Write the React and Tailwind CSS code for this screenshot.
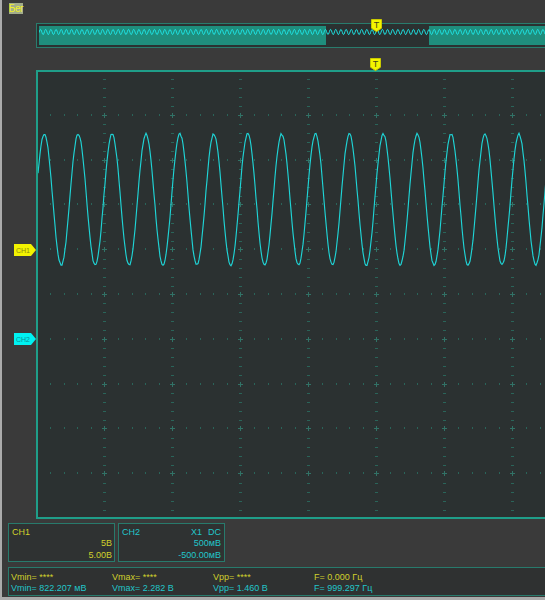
import React from "react";

const FONT = "font-['Liberation_Sans','Arial',sans-serif]";

function frac(v) {
  return v - Math.floor(v);
}
function rnd(i) {
  return frac(Math.sin(i * 12.9898 + 78.233) * 43758.5453);
}

function TMarker() {
  return (
    <svg width="11" height="13" viewBox="0 0 11 13" className="block overflow-visible">
      <path d="M0.5 0.5H10.5V9.2L5.5 12.6L0.5 9.2Z" fill="#f4f400" stroke="#caca00" strokeWidth="1" />
      <text
        x="5.5"
        y="8.8"
        textAnchor="middle"
        fontSize="9"
        fontFamily="Liberation Sans, Arial, sans-serif"
        fill="#45451c"
      >
        T
      </text>
    </svg>
  );
}

function ChMarker({ fill, textColor, label }) {
  return (
    <svg width="22" height="12" viewBox="0 0 22 12" className="block">
      <path d="M0 0H17L22 6L17 12H0Z" fill={fill} />
      <text
        x="9"
        y="8.7"
        textAnchor="middle"
        fontSize="7"
        fontFamily="Liberation Sans, Arial, sans-serif"
        fill={textColor}
      >
        {label}
      </text>
    </svg>
  );
}

function Overview() {
  const pts = [];
  for (let x = 39; x <= 550; x += 0.5) {
    const y = 32 - 2.6 * Math.cos((2 * Math.PI * (x - 40.5)) / 5.18);
    pts.push(x.toFixed(1) + "," + y.toFixed(2));
  }
  return (
    <svg width="509" height="19" viewBox="39 26 509 19" className="block">
      <rect x="39" y="26" width="287" height="19" fill="#1f8e7d" />
      <rect x="429" y="26" width="130" height="19" fill="#1f8e7d" />
      <polyline points={pts.join(" ")} fill="none" stroke="#1ee3e3" strokeWidth="1" />
    </svg>
  );
}

function Plot() {
  const tick = "#2a6459";
  const majorX = [];
  for (let k = 1; k <= 9; k++) majorX.push(36.5 + 68 * k);
  const majorY = [];
  for (let k = 1; k <= 9; k++) majorY.push(70.5 + 44.8 * k);

  const marks = [];
  majorX.forEach((x, a) => {
    for (let j = 1; j < 50; j++) {
      if (j % 5 === 0) continue;
      const y = Math.round(70.5 + 8.96 * j);
      marks.push(
        <rect key={"v" + a + "-" + j} x={Math.floor(x) - 1} y={y} width="3" height="1" fill={tick} />
      );
    }
  });
  majorY.forEach((y, a) => {
    for (let i = 1; i < 50; i++) {
      if (i % 5 === 0) continue;
      const x = Math.round(36.5 + 13.6 * i);
      marks.push(
        <rect key={"h" + a + "-" + i} x={x} y={Math.floor(y) - 1} width="1" height="2" fill={tick} />
      );
    }
  });
  majorX.forEach((x, a) => {
    majorY.forEach((y, b) => {
      const cx = Math.floor(x);
      const cy = Math.floor(y);
      marks.push(
        <g key={"c" + a + "-" + b} fill="#317266">
          <rect x={cx - 2} y={cy} width="5" height="1" />
          <rect x={cx} y={cy - 2} width="1" height="5" />
        </g>
      );
    });
  });

  const wave = [];
  let i = 0;
  for (let x = 38; x <= 716; x += 1) {
    const base = 199.5 - 65.5 * Math.cos((2 * Math.PI * (x - 44.3)) / 33.9);
    const y = base + (rnd(i) - 0.5) * 1.8;
    wave.push(x + "," + y.toFixed(2));
    i++;
  }

  return (
    <svg width="678" height="445" viewBox="38 72 678 445" className="block">
      {marks}
      <polyline points={wave.join(" ")} fill="none" stroke="#1fd4d6" strokeWidth="1.15" />
    </svg>
  );
}

function MeasureCol({ label, top, bottom }) {
  return (
    <div className="flex flex-col w-[101px] shrink-0">
      <div className="text-[#d0d02c] leading-[10.5px] whitespace-pre">
        {label}= {top}
      </div>
      <div className="text-[#22c6ca] leading-[10.5px] whitespace-pre">
        {label}= {bottom}
      </div>
    </div>
  );
}

export default function App() {
  return (
    <div className={"w-[545px] h-[600px] overflow-hidden bg-[#3a3a3a] flex flex-col text-[9px] " + FONT}>
      <div className="flex h-[597px] shrink-0">
        <div className="w-[2px] shrink-0 bg-[#ababab]" />
        <div className="flex flex-col flex-1 min-w-0">
          {/* top label row */}
          <div className="h-[23px] shrink-0 flex items-start">
            <div className="ml-[7px] mt-[3px] w-[14px] h-[11px] bg-[#a2ac8a] text-[#f0f028] text-[10px] leading-[11px] tracking-[-0.5px] flex items-center justify-center overflow-visible whitespace-nowrap">
              Бег
            </div>
          </div>

          {/* overview bar */}
          <div className="ml-[34px] h-[25px] w-[520px] shrink-0 relative border border-[#297c6d] bg-[#2b3131] p-[2px]">
            <Overview />
            <div className="absolute left-[334px] top-[-5px]">
              <TMarker />
            </div>
          </div>

          <div className="h-[10px] shrink-0" />

          {/* trigger marker row */}
          <div className="h-[12px] shrink-0 flex items-start">
            <div className="ml-[368px] relative z-10">
              <TMarker />
            </div>
          </div>

          {/* plot row */}
          <div className="flex h-[449px] shrink-0">
            <div className="w-[34px] shrink-0 relative">
              <div className="absolute left-[12px] top-[174px]">
                <ChMarker fill="#f2f200" textColor="#8a8a10" label="CH1" />
              </div>
              <div className="absolute left-[12px] top-[263px]">
                <ChMarker fill="#00f2f2" textColor="#0b8f95" label="CH2" />
              </div>
            </div>
            <div className="w-[682px] h-[449px] shrink-0 border-2 border-[#1f9e89] bg-[#2b3131]">
              <Plot />
            </div>
          </div>

          {/* channel boxes */}
          <div className="mt-[4px] ml-[6px] flex gap-[3px] shrink-0">
            <div className="w-[107px] h-[39px] border border-[#287a6c] bg-[#2f3232] pt-[2.5px] pl-[3px] pr-[2px] text-[#d0d02c] leading-[11.5px]">
              <div>CH1</div>
              <div className="text-right">5В</div>
              <div className="text-right">5.00В</div>
            </div>
            <div className="w-[107px] h-[39px] border border-[#287a6c] bg-[#2f3232] pt-[2.5px] pl-[3px] pr-[3px] text-[#22c6ca] leading-[11.5px]">
              <div className="flex justify-between">
                <span>CH2</span>
                <span className="flex gap-[6px]">
                  <span>X1</span>
                  <span>DC</span>
                </span>
              </div>
              <div className="text-right">500мВ</div>
              <div className="text-right">-500.00мВ</div>
            </div>
          </div>

          {/* measurements */}
          <div className="mt-[5px] ml-[6px] w-[560px] h-[29px] shrink-0 border border-[#287a6c] bg-[#2f3131] pt-[4px] pl-[2px] flex">
            <MeasureCol label="Vmin" top="****" bottom="822.207 мВ" />
            <MeasureCol label="Vmax" top="****" bottom="2.282 В" />
            <MeasureCol label="Vpp" top="****" bottom="1.460 В" />
            <MeasureCol label="F" top="0.000 Гц" bottom="999.297 Гц" />
          </div>
        </div>
      </div>
      <div className="h-[3px] shrink-0 bg-[#ababab]" />
    </div>
  );
}
